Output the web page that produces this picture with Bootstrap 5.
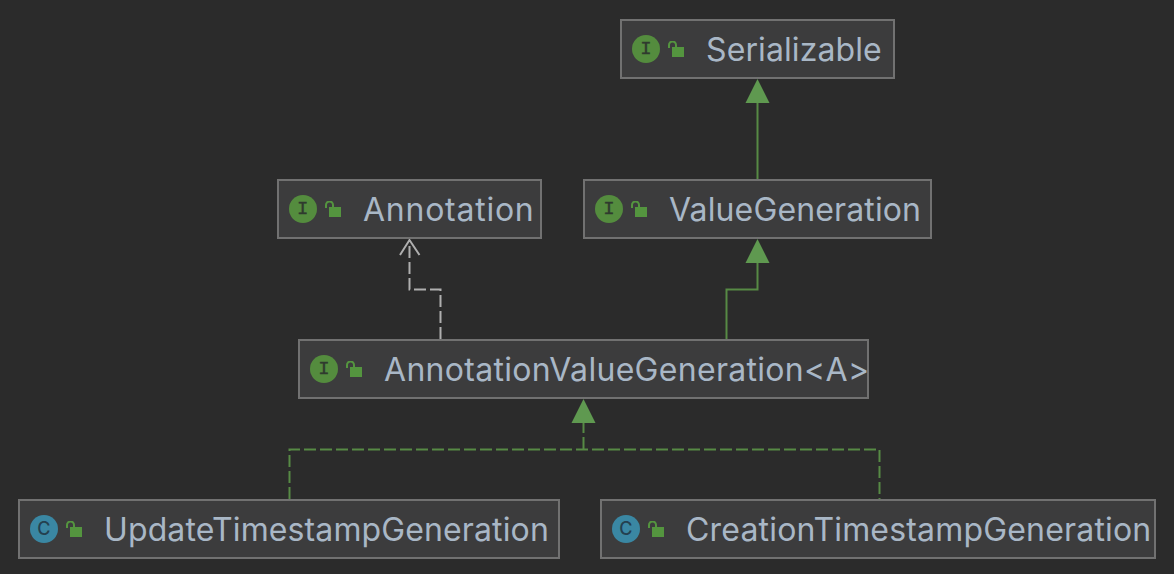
<!DOCTYPE html>
<html lang="en">
<head>
<meta charset="utf-8">
<title>Class diagram</title>
<link href="https://cdn.jsdelivr.net/npm/bootstrap@5.3.0/dist/css/bootstrap.min.css" rel="stylesheet">
<style>
html, body { margin: 0; height: 100%; background: #2b2b2b; overflow: hidden; }
.diagram { position: relative; width: 1174px; height: 574px; background: #2b2b2b; }
.edges { position: absolute; left: 0; top: 0; }
.uml-node { position: absolute; height: 60px; background: #3c3c3d; border: 2px solid #717171; color: #a9b7c6; font-family: Inter, "Noto Sans", sans-serif; font-size: 32px; line-height: 1; white-space: nowrap; padding-left: 10px; }
.kind { width: 28px; height: 28px; flex: none; border-radius: 50%; line-height: 1; }
.kind-i { background: #548c3e; color: #2f3a2e; font-family: "Liberation Mono", monospace; font-weight: 400; font-size: 19px; -webkit-text-stroke: .35px #2f3a2e; }
.kind-c { background: #3a87a3; color: #24404f; font-family: Inter, sans-serif; font-weight: 500; font-size: 18px; }
.lock { flex: none; margin-left: 8px; width: 16px; height: 16px; margin-top: -1px; }
.label { margin-left: 22px; padding-top: 2px; }
.n-ser { left: 620px; top: 19px; width: 275px; letter-spacing: .1px; }
.n-ann { left: 277px; top: 179px; width: 265px; letter-spacing: .75px; }
.n-val { left: 583px; top: 179px; width: 349px; letter-spacing: .13px; }
.n-avg { left: 298px; top: 339px; width: 571px; letter-spacing: .3px; }
.n-upd { left: 18px; top: 499px; width: 542px; letter-spacing: .12px; }
.n-cre { left: 600px; top: 499px; width: 556px; letter-spacing: .18px; }
</style>
</head>
<body>
<main class="diagram">
<svg class="edges" width="1174" height="574" viewBox="0 0 1174 574" fill="none">
  <g stroke="#578a45" stroke-width="2">
    <path d="M757.5 103V180"/>
    <path d="M726.5 339V289.5H757.5V262"/>
    <path d="M289.5 499V449.5H879.5V499" stroke-dasharray="12 4"/>
    <path d="M583.5 449V422" stroke-dasharray="12 4"/>
  </g>
  <g fill="#5f9950">
    <path d="M757.5 79L769.5 103H745.5Z"/>
    <path d="M757.5 239L769.5 263H745.5Z"/>
    <path d="M583.5 399L595.5 423H571.5Z"/>
  </g>
  <g stroke="#afafaf" stroke-width="2">
    <path d="M440.5 339V289.5H409.5V241" stroke-dasharray="12 4"/>
    <path d="M400 255L409.5 240L419.5 255"/>
  </g>
</svg>

<div class="uml-node n-ser d-flex align-items-center">
  <span class="kind kind-i d-flex align-items-center justify-content-center">I</span>
  <svg class="lock" viewBox="0 0 16 16"><path d="M1 7V4a3.5 3.5 0 0 1 7 0V6" fill="none" stroke="#54953f" stroke-width="2"/><rect x="4" y="6" width="12" height="10" fill="#54953f"/></svg>
  <span class="label">Serializable</span>
</div>
<div class="uml-node n-ann d-flex align-items-center">
  <span class="kind kind-i d-flex align-items-center justify-content-center">I</span>
  <svg class="lock" viewBox="0 0 16 16"><path d="M1 7V4a3.5 3.5 0 0 1 7 0V6" fill="none" stroke="#54953f" stroke-width="2"/><rect x="4" y="6" width="12" height="10" fill="#54953f"/></svg>
  <span class="label">Annotation</span>
</div>
<div class="uml-node n-val d-flex align-items-center">
  <span class="kind kind-i d-flex align-items-center justify-content-center">I</span>
  <svg class="lock" viewBox="0 0 16 16"><path d="M1 7V4a3.5 3.5 0 0 1 7 0V6" fill="none" stroke="#54953f" stroke-width="2"/><rect x="4" y="6" width="12" height="10" fill="#54953f"/></svg>
  <span class="label">ValueGeneration</span>
</div>
<div class="uml-node n-avg d-flex align-items-center">
  <span class="kind kind-i d-flex align-items-center justify-content-center">I</span>
  <svg class="lock" viewBox="0 0 16 16"><path d="M1 7V4a3.5 3.5 0 0 1 7 0V6" fill="none" stroke="#54953f" stroke-width="2"/><rect x="4" y="6" width="12" height="10" fill="#54953f"/></svg>
  <span class="label">AnnotationValueGeneration&lt;A&gt;</span>
</div>
<div class="uml-node n-upd d-flex align-items-center">
  <span class="kind kind-c d-flex align-items-center justify-content-center">C</span>
  <svg class="lock" viewBox="0 0 16 16"><path d="M1 7V4a3.5 3.5 0 0 1 7 0V6" fill="none" stroke="#54953f" stroke-width="2"/><rect x="4" y="6" width="12" height="10" fill="#54953f"/></svg>
  <span class="label">UpdateTimestampGeneration</span>
</div>
<div class="uml-node n-cre d-flex align-items-center">
  <span class="kind kind-c d-flex align-items-center justify-content-center">C</span>
  <svg class="lock" viewBox="0 0 16 16"><path d="M1 7V4a3.5 3.5 0 0 1 7 0V6" fill="none" stroke="#54953f" stroke-width="2"/><rect x="4" y="6" width="12" height="10" fill="#54953f"/></svg>
  <span class="label">CreationTimestampGeneration</span>
</div>
</main>
<script src="https://cdn.jsdelivr.net/npm/bootstrap@5.3.0/dist/js/bootstrap.bundle.min.js"></script>
</body>
</html>
